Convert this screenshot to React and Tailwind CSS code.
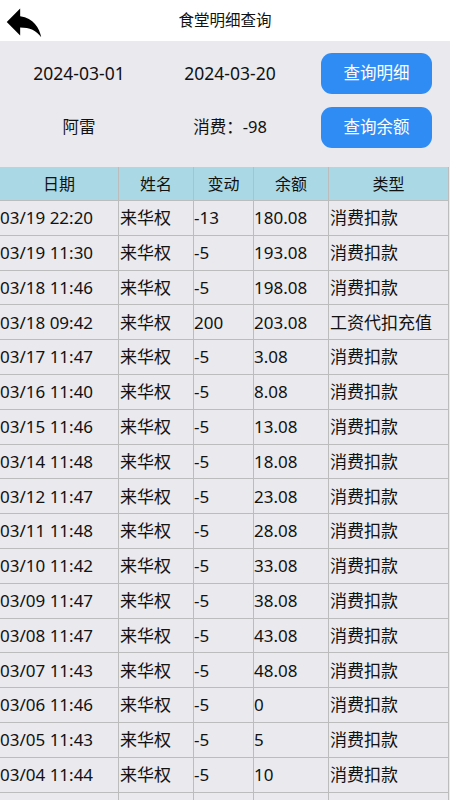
import React from "react";

const rows = [
  ["03/19 22:20", "-13", "180.08", "消费扣款"],
  ["03/19 11:30", "-5", "193.08", "消费扣款"],
  ["03/18 11:46", "-5", "198.08", "消费扣款"],
  ["03/18 09:42", "200", "203.08", "工资代扣充值"],
  ["03/17 11:47", "-5", "3.08", "消费扣款"],
  ["03/16 11:40", "-5", "8.08", "消费扣款"],
  ["03/15 11:46", "-5", "13.08", "消费扣款"],
  ["03/14 11:48", "-5", "18.08", "消费扣款"],
  ["03/12 11:47", "-5", "23.08", "消费扣款"],
  ["03/11 11:48", "-5", "28.08", "消费扣款"],
  ["03/10 11:42", "-5", "33.08", "消费扣款"],
  ["03/09 11:47", "-5", "38.08", "消费扣款"],
  ["03/08 11:47", "-5", "43.08", "消费扣款"],
  ["03/07 11:43", "-5", "48.08", "消费扣款"],
  ["03/06 11:46", "-5", "0", "消费扣款"],
  ["03/05 11:43", "-5", "5", "消费扣款"],
  ["03/04 11:44", "-5", "10", "消费扣款"],
  ["", "", "", ""],
];

const font = { fontFamily: '"Noto Sans", "Noto Sans CJK SC", sans-serif' };

export default function App() {
  return (
    <div className="w-[450px] h-[800px] overflow-hidden bg-[#e9e9ee] text-[#111]" style={font}>
      <div className="relative h-[41px] bg-white flex items-center justify-center">
        <svg className="absolute left-[1px] top-[-1px]" width="46" height="46" viewBox="0 0 24 24">
          <path d="M10 9V5l-7 7 7 7v-4.1c5 0 8.5 1.6 11 5.1-1-5-4-10-11-11z" fill="#000" />
        </svg>
        <span className="text-[15.5px]">食堂明细查询</span>
      </div>
      <div className="pt-[12px] pb-[19px] flex flex-col gap-[13px]">
        <div className="flex items-center h-[41px]">
          <div className="w-[158px] text-center text-[17.5px]">2024-03-01</div>
          <div className="w-[144px] text-center text-[17.5px]">2024-03-20</div>
          <button className="ml-[19px] w-[111px] h-[41px] rounded-[11px] bg-[#2f8cf5] text-white text-[16.5px]">查询明细</button>
        </div>
        <div className="flex items-center h-[41px]">
          <div className="w-[158px] text-center text-[16.5px]">阿雷</div>
          <div className="w-[144px] text-center text-[16.5px]">消费：-98</div>
          <button className="ml-[19px] w-[111px] h-[41px] rounded-[11px] bg-[#2f8cf5] text-white text-[16.5px]">查询余额</button>
        </div>
      </div>
      <div className="w-[449px] border-r border-[#bcbcbc]">
        <div className="grid grid-cols-[119px_75px_60px_75px_1fr] h-[34px] bg-[#abd8e5] text-[16px] border-b border-[#bcbcbc]">
          <div className="flex items-center justify-center border-r border-[#bcbcbc]">日期</div>
          <div className="flex items-center justify-center border-r border-[#bcbcbc]">姓名</div>
          <div className="flex items-center justify-center border-r border-[#bcbcbc]">变动</div>
          <div className="flex items-center justify-center border-r border-[#bcbcbc]">余额</div>
          <div className="flex items-center justify-center">类型</div>
        </div>
        {rows.map((r, i) => (
          <div key={i} className="grid grid-cols-[119px_75px_60px_75px_1fr] h-[34.8px] text-[17px] border-b border-[#bcbcbc]">
            <div className="flex items-center border-r border-[#bcbcbc] whitespace-nowrap">{r[0]}</div>
            <div className="flex items-center pl-[1px] border-r border-[#bcbcbc]">{r[0] ? "来华权" : ""}</div>
            <div className="flex items-center border-r border-[#bcbcbc]">{r[1]}</div>
            <div className="flex items-center border-r border-[#bcbcbc]">{r[2]}</div>
            <div className="flex items-center pl-[1px] whitespace-nowrap">{r[3]}</div>
          </div>
        ))}
      </div>
    </div>
  );
}
